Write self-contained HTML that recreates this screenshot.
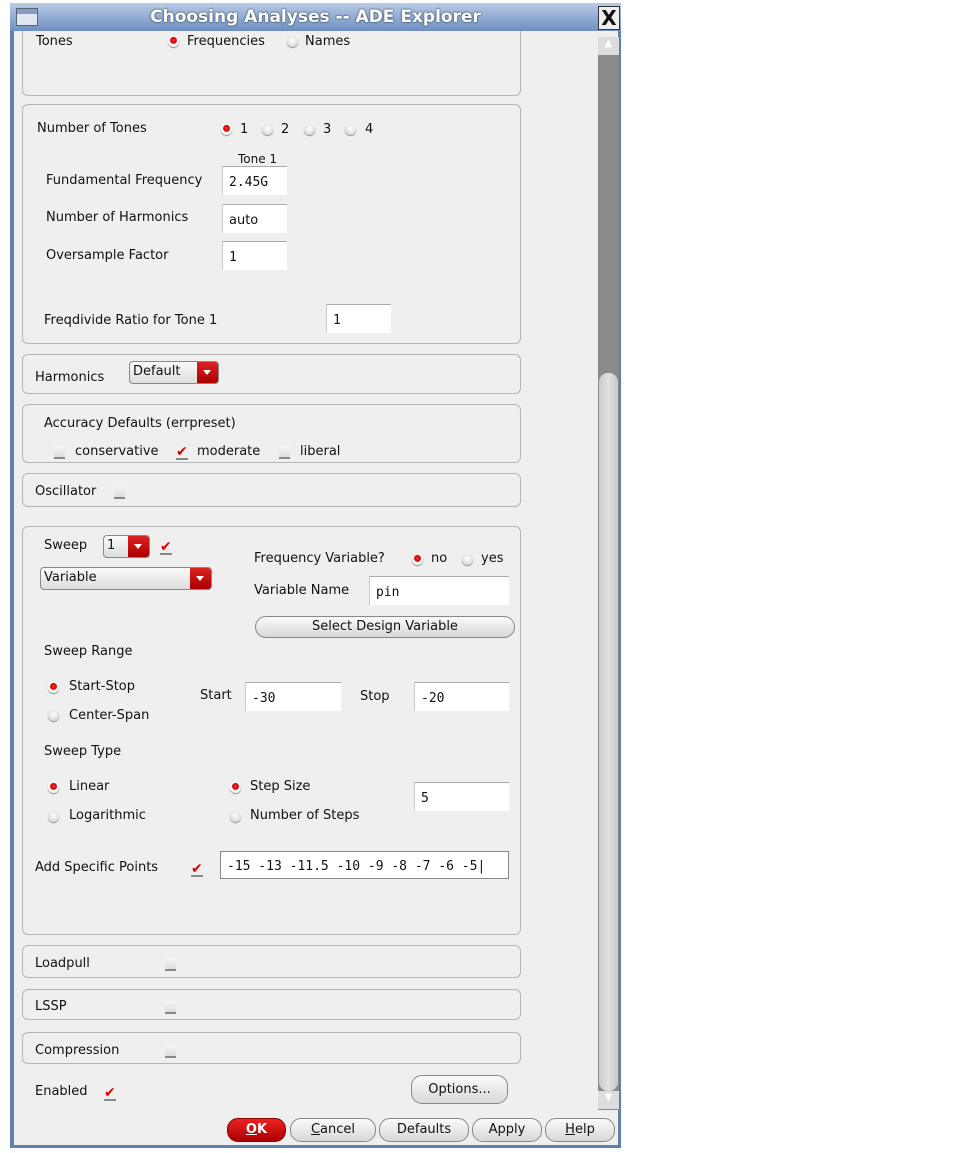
<!DOCTYPE html>
<html><head><meta charset="utf-8"><style>
body{margin:0;width:963px;height:1153px;background:#fff;position:relative;overflow:hidden;font-family:"DejaVu Sans","Liberation Sans",sans-serif;font-size:13px;color:#111;line-height:1.4}
.a{position:absolute}
#win{left:10px;top:3px;width:611px;height:1145px;background:#5f7fae}
#title{left:10px;top:3px;width:611px;height:28px;background:linear-gradient(#b8cbe6,#6e8fc2);}
#title span{position:absolute;left:0;right:0;top:3px;text-align:center;color:#fff;font-weight:bold;font-size:17px;line-height:22px;text-shadow:0 0 2px #345,0 0 1px #234}
#body{left:14px;top:31px;width:604px;height:1114px;background:#efefef}
.p{position:absolute;left:22px;width:497px;border:1px solid #b5b5b5;border-radius:6px;background:#efefef}
.r{position:absolute;width:11px;height:11px;border-radius:50%;background:radial-gradient(circle at 50% 40%,#fff,#ccc);box-shadow:0 1px 1px #888;margin-top:1px}
.r.on{background:radial-gradient(circle at 50% 40%,#f33 0,#c00 35%,#fff 45%,#ddd)}
.c{position:absolute;width:11px;height:11px;border-bottom:2px solid #888;background:linear-gradient(#f6f6f6,#ddd);margin-top:2px}
.ck{position:absolute;font-size:14px;color:#d00;font-weight:bold;line-height:12px;border-bottom:2px solid #888;width:12px;height:12px;margin-top:2px}
.in{position:absolute;background:#fff;border-top:1px solid #aaa;border-left:1px solid #ccc;font-family:"DejaVu Sans Mono","Liberation Mono",monospace;font-size:13px;padding:8px 0 0 6px;box-sizing:border-box;line-height:normal}
.btn{position:absolute;border:1px solid #888;border-radius:11px;background:linear-gradient(#fafafa,#d8d8d8);text-align:center;box-sizing:border-box}
.dd{position:absolute;border:1px solid #888;border-radius:4px;background:linear-gradient(#fafafa,#ddd);box-sizing:border-box;padding:2px 3px;overflow:hidden;line-height:normal}
.dd b{position:absolute;right:0;top:0;bottom:0;width:21px;background:linear-gradient(#d22,#a00)}
.dd b:after{content:"";position:absolute;left:6px;top:8px;border:4px solid transparent;border-top:5px solid #fff}
</style></head><body>
<div class="a" id="win"></div>
<div class="a" id="body"></div>
<!-- scrollbar -->
<div class="a" style="left:598px;top:37px;width:21px;height:1073px;background:#8a8a8a"></div>
<div class="a" style="left:598px;top:37px;width:21px;height:18px;background:#ddd;color:#fff;text-align:center;font-size:10px">▲</div>
<div class="a" style="left:599px;top:373px;width:19px;height:718px;background:linear-gradient(90deg,#ccc,#e0e0e0,#c8c8c8);border-radius:9px"></div>
<div class="a" style="left:598px;top:1091px;width:21px;height:18px;background:#ddd;color:#fff;text-align:center;font-size:10px">▼</div>

<div class="p" style="top:20px;height:74px"></div>
<div class="a" style="left:36px;top:33px">Tones</div>
<div class="r on" style="left:168px;top:35px"></div><div class="a" style="left:187px;top:33px">Frequencies</div>
<div class="r" style="left:287px;top:35px"></div><div class="a" style="left:305px;top:33px">Names</div>

<div class="p" style="top:104px;height:238px"></div>
<div class="a" style="left:37px;top:120px">Number of Tones</div>
<div class="r on" style="left:221px;top:123px"></div><div class="a" style="left:240px;top:121px">1</div>
<div class="r" style="left:262px;top:123px"></div><div class="a" style="left:281px;top:121px">2</div>
<div class="r" style="left:304px;top:123px"></div><div class="a" style="left:323px;top:121px">3</div>
<div class="r" style="left:345px;top:123px"></div><div class="a" style="left:365px;top:121px">4</div>
<div class="a" style="left:238px;top:151px;font-size:12px">Tone 1</div>
<div class="a" style="left:46px;top:172px">Fundamental Frequency</div><div class="in" style="left:222px;top:166px;width:65px;height:29px">2.45G</div>
<div class="a" style="left:46px;top:209px">Number of Harmonics</div><div class="in" style="left:222px;top:204px;width:65px;height:29px;font-family:'DejaVu Sans',sans-serif">auto</div>
<div class="a" style="left:46px;top:247px">Oversample Factor</div><div class="in" style="left:222px;top:241px;width:65px;height:29px">1</div>
<div class="a" style="left:44px;top:312px">Freqdivide Ratio for Tone 1</div><div class="in" style="left:326px;top:304px;width:65px;height:29px">1</div>

<div class="p" style="top:354px;height:38px"></div>
<div class="a" style="left:35px;top:369px">Harmonics</div>
<div class="dd" style="left:129px;top:361px;width:90px;height:23px">Default<b></b></div>

<div class="p" style="top:404px;height:57px"></div>
<div class="a" style="left:44px;top:415px">Accuracy Defaults (errpreset)</div>
<div class="c" style="left:54px;top:444px"></div><div class="a" style="left:75px;top:443px">conservative</div>
<div class="ck" style="left:176px;top:444px">✔</div><div class="a" style="left:197px;top:443px">moderate</div>
<div class="c" style="left:279px;top:444px"></div><div class="a" style="left:300px;top:443px">liberal</div>

<div class="p" style="top:473px;height:32px"></div>
<div class="a" style="left:35px;top:483px">Oscillator</div><div class="c" style="left:114px;top:484px"></div>

<div class="p" style="top:526px;height:407px"></div>
<div class="a" style="left:44px;top:537px">Sweep</div>
<div class="dd" style="left:103px;top:535px;width:47px;height:23px">1<b></b></div>
<div class="ck" style="left:160px;top:539px">✔</div>
<div class="dd" style="left:40px;top:567px;width:172px;height:23px">Variable<b></b></div>
<div class="a" style="left:254px;top:550px">Frequency Variable?</div>
<div class="r on" style="left:412px;top:553px"></div><div class="a" style="left:431px;top:550px">no</div>
<div class="r" style="left:462px;top:553px"></div><div class="a" style="left:481px;top:550px">yes</div>
<div class="a" style="left:254px;top:582px">Variable Name</div><div class="in" style="left:369px;top:576px;width:140px;height:29px">pin</div>
<div class="btn" style="left:255px;top:616px;width:260px;height:22px;line-height:20px">Select Design Variable</div>
<div class="a" style="left:44px;top:643px">Sweep Range</div>
<div class="r on" style="left:48px;top:681px"></div><div class="a" style="left:69px;top:678px">Start-Stop</div>
<div class="r" style="left:48px;top:709px"></div><div class="a" style="left:69px;top:707px">Center-Span</div>
<div class="a" style="left:200px;top:687px">Start</div><div class="in" style="left:245px;top:682px;width:96px;height:29px">-30</div>
<div class="a" style="left:360px;top:688px">Stop</div><div class="in" style="left:414px;top:682px;width:95px;height:29px">-20</div>
<div class="a" style="left:44px;top:743px">Sweep Type</div>
<div class="r on" style="left:48px;top:781px"></div><div class="a" style="left:69px;top:778px">Linear</div>
<div class="r" style="left:48px;top:810px"></div><div class="a" style="left:69px;top:807px">Logarithmic</div>
<div class="r on" style="left:230px;top:781px"></div><div class="a" style="left:250px;top:778px">Step Size</div>
<div class="r" style="left:230px;top:810px"></div><div class="a" style="left:250px;top:807px">Number of Steps</div>
<div class="in" style="left:414px;top:782px;width:95px;height:29px">5</div>
<div class="a" style="left:35px;top:859px">Add Specific Points</div>
<div class="ck" style="left:191px;top:861px">✔</div>
<div class="in" style="left:220px;top:851px;width:289px;height:28px;border:1px solid #888;padding-top:7px">-15 -13 -11.5 -10 -9 -8 -7 -6 -5|</div>

<div class="p" style="top:945px;height:31px"></div>
<div class="a" style="left:35px;top:955px">Loadpull</div><div class="c" style="left:165px;top:956px"></div>
<div class="p" style="top:989px;height:29px"></div>
<div class="a" style="left:35px;top:998px">LSSP</div><div class="c" style="left:165px;top:999px"></div>
<div class="p" style="top:1032px;height:30px"></div>
<div class="a" style="left:35px;top:1042px">Compression</div><div class="c" style="left:165px;top:1043px"></div>
<div class="a" style="left:35px;top:1083px">Enabled</div><div class="ck" style="left:104px;top:1085px">✔</div>
<div class="btn" style="left:411px;top:1075px;width:97px;height:29px;line-height:27px">Options...</div>
<div class="btn" style="left:227px;top:1118px;width:59px;height:24px;line-height:22px;background:linear-gradient(#e22,#a00);color:#fff;font-weight:bold;border-color:#800"><u>O</u>K</div>
<div class="btn" style="left:290px;top:1118px;width:86px;height:24px;line-height:22px"><u>C</u>ancel</div>
<div class="btn" style="left:379px;top:1118px;width:90px;height:24px;line-height:22px">Defaults</div>
<div class="btn" style="left:472px;top:1118px;width:70px;height:24px;line-height:22px">Apply</div>
<div class="btn" style="left:545px;top:1118px;width:70px;height:24px;line-height:22px"><u>H</u>elp</div>

<div class="a" id="title"><span>Choosing Analyses -- ADE Explorer</span></div>
<div class="a" style="left:16px;top:8px;width:20px;height:16px;background:linear-gradient(#889cc0 30%,#e0e6f0 30%);border:1px solid #567"></div>
<div class="a" style="left:598px;top:6px;width:20px;height:22px;background:#eee;border:1px solid #333;font-size:20px;line-height:22px;text-align:center;font-weight:bold">X</div>
</body></html>
